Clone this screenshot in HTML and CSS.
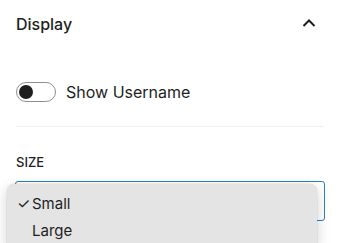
FILE: index.html
```html
<!DOCTYPE html>
<html lang="en">
<head>
    <meta charset="UTF-8">
    <meta name="viewport" content="width=device-width, initial-scale=1.0">
    <title>Display settings</title>
    <link rel="stylesheet" href="styles.css">
</head>
<body>
    <div class="panel">
        <div class="panel-header">
            <h2>Display</h2>
            <svg class="chevron" width="16" height="10" viewBox="0 0 16 10" aria-hidden="true">
                <polyline points="2.5,8 8,2.5 13.5,8" fill="none" stroke="#1e1e1e" stroke-width="2"/>
            </svg>
        </div>

        <label class="toggle-row">
            <span class="toggle"><span class="knob"></span></span>
            <span class="toggle-label">Show Username</span>
        </label>

        <hr class="divider">

        <div class="field-label">SIZE</div>
        <div class="select">
            <ul class="menu">
                <li class="menu-item"><span class="check">✓</span>Small</li>
                <li class="menu-item"><span class="check"></span>Large</li>
            </ul>
        </div>
    </div>
</body>
</html>
```

FILE: styles.css
```css
body {
    margin: 0;
    padding: 0;
    height: 243px;
    overflow: hidden;
    background: #fff;
    font-family: Inter, "Noto Sans", Arial, sans-serif;
    color: #1e1e1e;
}
.panel {
    padding: 0 20px 0 16px;
}
.panel-header {
    display: flex;
    align-items: center;
    justify-content: space-between;
    padding-top: 12px;
    height: 24px;
}
.panel-header h2 {
    margin: 0;
    font-size: 16px;
    font-weight: 500;
    line-height: 24px;
}
.chevron {
    margin-right: 7px;
    margin-bottom: 3px;
}
.toggle-row {
    display: flex;
    align-items: center;
    margin-top: 46px;
    height: 20px;
}
.toggle {
    position: relative;
    box-sizing: border-box;
    width: 40px;
    height: 20px;
    border: 1px solid #8f8f8f;
    border-radius: 10px;
    background: #fff;
    margin-right: 10px;
}
.knob {
    position: absolute;
    left: 2px;
    top: 2px;
    width: 14px;
    height: 14px;
    border-radius: 50%;
    background: #1e1e1e;
}
.toggle-label {
    font-size: 16px;
    line-height: 20px;
}
.divider {
    margin: 24px 0 0;
    border: none;
    border-top: 1px solid #f0f0f0;
}
.field-label {
    margin-top: 27px;
    font-size: 13px;
    font-weight: 500;
    line-height: 16px;
}
.select {
    position: relative;
    box-sizing: border-box;
    margin: 11px -1px 0;
    height: 40px;
    border: 1.5px solid #2b7fc0;
    border-radius: 3px;
}
.menu {
    position: absolute;
    left: -9px;
    top: 2px;
    width: 310px;
    margin: 0;
    padding: 6px 0;
    list-style: none;
    background: #e4e4e4;
    border-radius: 7px;
    box-shadow: 0 0 0 0.5px rgba(0, 0, 0, 0.08), 0 4px 14px rgba(0, 0, 0, 0.18);
}
.menu-item {
    display: flex;
    padding-left: 10px;
    font-size: 15px;
    line-height: 27px;
}
.check {
    display: inline-block;
    width: 15px;
    font-size: 15px;
}
```
